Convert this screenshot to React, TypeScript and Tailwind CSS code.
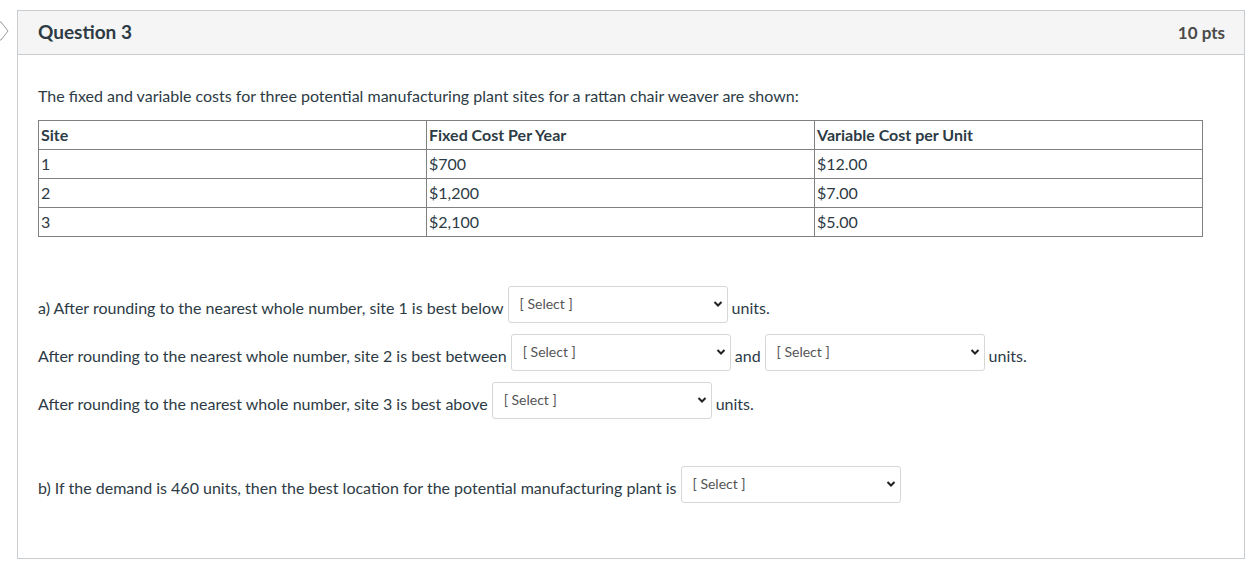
import React from "react";

const rows = [
  { site: "1", fixed: "$700", variable: "$12.00" },
  { site: "2", fixed: "$1,200", variable: "$7.00" },
  { site: "3", fixed: "$2,100", variable: "$5.00" },
];

function Dropdown({ width = "w-[220px]" }: { width?: string }) {
  return (
    <div className={`relative ${width} h-[37px] shrink-0`}>
      <select
        defaultValue=""
        className="w-full h-full appearance-none bg-white border border-[#d7d7d7] rounded-[3px] pl-[11px] pr-8 pb-[3px] text-[14px] text-[#555] outline-none"
      >
        <option value="">[ Select ]</option>
      </select>
      <svg
        className="pointer-events-none absolute right-[4px] top-[13px]"
        width="12"
        height="10"
        viewBox="0 0 12 10"
      >
        <path d="M2.5 3 L6 6.5 L9.5 3" fill="none" stroke="#222" strokeWidth="2" />
      </svg>
    </div>
  );
}

export default function App() {
  return (
    <div className="relative min-h-[567px] bg-white pt-[10px] pl-[17px] pr-[8px] font-['Lato','Noto_Sans',sans-serif] text-[#2d3b45]">
      {/* question flag, mostly off-screen */}
      <svg className="absolute left-0 top-[21px]" width="12" height="20" viewBox="0 0 12 20">
        <path d="M-10 1 L1 1 L8 10 L1 19 L-10 19 Z" fill="white" stroke="#9a9a9a" strokeWidth="1" strokeLinejoin="round" />
      </svg>

      <div className="border border-[#c7cdd1] h-[549px] flex flex-col">
        <header className="h-[44px] bg-[#f5f5f5] border-b border-[#c7cdd1] flex items-center justify-between pl-[20px] pr-[19px]">
          <h2 className="text-[19px] font-bold">Question 3</h2>
          <span className="text-[17px] font-bold text-[#4a4a4a]">10 pts</span>
        </header>

        <div className="pl-[20px] pr-[41px] pt-[31px] text-[16px]">
          <p className="leading-[20px]">
            The fixed and variable costs for three potential manufacturing plant sites for a rattan chair weaver are shown:
          </p>

          <table className="mt-[14px] w-full border-collapse border border-[#808080] text-[16px]">
            <thead>
              <tr className="h-[29px]">
                <th className="border border-[#808080] text-left font-bold px-[2px] w-1/3">Site</th>
                <th className="border border-[#808080] text-left font-bold px-[2px] w-1/3">Fixed Cost Per Year</th>
                <th className="border border-[#808080] text-left font-bold px-[2px] w-1/3">Variable Cost per Unit</th>
              </tr>
            </thead>
            <tbody>
              {rows.map((r) => (
                <tr key={r.site} className="h-[29px]">
                  <td className="border border-[#808080] px-[2px]">{r.site}</td>
                  <td className="border border-[#808080] px-[2px]">{r.fixed}</td>
                  <td className="border border-[#808080] px-[2px]">{r.variable}</td>
                </tr>
              ))}
            </tbody>
          </table>

          <div className="mt-[49px] flex flex-col gap-[11px]">
            <div className="flex items-center gap-[4px]">
              <span className="mt-[6px]">a) After rounding to the nearest whole number, site 1 is best below</span>
              <Dropdown />
              <span className="mt-[6px]">units.</span>
            </div>
            <div className="flex items-center gap-[4px]">
              <span className="mt-[6px]">After rounding to the nearest whole number, site 2 is best between</span>
              <Dropdown />
              <span className="mt-[6px]">and</span>
              <Dropdown />
              <span className="mt-[6px]">units.</span>
            </div>
            <div className="flex items-center gap-[4px]">
              <span className="mt-[6px]">After rounding to the nearest whole number, site 3 is best above</span>
              <Dropdown />
              <span className="mt-[6px]">units.</span>
            </div>
          </div>

          <div className="mt-[47px] flex items-center gap-[4px]">
            <span className="mt-[6px]">b) If the demand is 460 units, then the best location for the potential manufacturing plant is</span>
            <Dropdown />
          </div>
        </div>
      </div>
    </div>
  );
}
